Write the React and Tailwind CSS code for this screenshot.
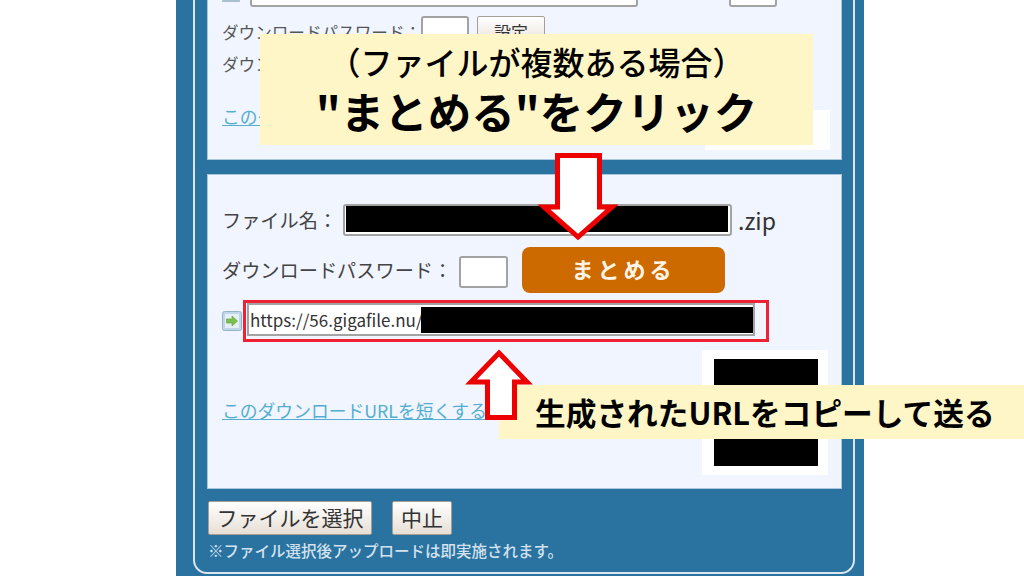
const jp = { fontFamily: '"Noto Sans CJK JP", sans-serif' };

const DownArrow = () => (
  <svg width="84" height="90" viewBox="0 0 84 90" className="absolute left-[536px] top-[152px]">
    <path d="M21.5 3.5H63.5V55H76L42 85L8 55H21.5Z" fill="#fff" stroke="#ee0000" strokeWidth="5" strokeMiterlimit="10" />
  </svg>
);

const UpArrow = () => (
  <svg width="74" height="76" viewBox="0 0 74 76" className="absolute left-[463px] top-[347px]">
    <path d="M36 6L64 35H51.5V70.5H24.5V35H8Z" fill="#fff" stroke="#ee0000" strokeWidth="5" strokeMiterlimit="10" />
  </svg>
);

const GoIcon = () => (
  <svg width="20" height="20" viewBox="0 0 20 20" className="shrink-0">
    <rect x="0.5" y="0.5" width="19" height="19" rx="2" fill="#c0d7ea" stroke="#93b4cd" />
    <rect x="3" y="3" width="14" height="14" fill="#e6eff5" />
    <path d="M4.5 8H10V5L15.5 10L10 15V12H4.5Z" fill="#7cc04f" stroke="#5a9e38" strokeWidth="0.6" />
  </svg>
);

const Field = ({ w, children, className = '' }) => (
  <div className={`relative bg-white border-2 border-[#a3a3a3] rounded-[3px] overflow-hidden shrink-0 ${w} ${className}`}>{children}</div>
);

const GreyButton = ({ children, className = '' }) => (
  <div className={`flex items-center justify-center bg-gradient-to-b from-white to-[#e6dfd6] border border-[#a89f94] text-[#333] rounded-[2px] ${className}`}>{children}</div>
);

export default function App() {
  return (
    <div className="relative w-[1024px] h-[576px] overflow-hidden bg-white" style={jp}>
      <div className="ml-[176px] w-[688px] h-[576px] bg-[#2a72a0] pl-[17px] pr-[9px]">
        <div className="h-[574px] border-l-2 border-r-2 border-b-2 border-[#dbe6ee] rounded-bl-[14px] rounded-br-[14px] pl-[12px] pr-[11px]">
          <section className="h-[160px] bg-[#f0f5ff] border-x border-b border-[#a9c7dc] pl-[14px] text-[16.6px] text-[#555] overflow-hidden">
            <div className="flex h-[8px] -mt-[1px]">
              <div className="w-[18px] h-[3px] bg-[#a9bfd2] rounded-b-[1px]" />
              <Field w="w-[388px]" className="h-[30px] -mt-[22px] ml-[10px]" />
              <Field w="w-[48px]" className="h-[30px] -mt-[22px] ml-[91px]" />
            </div>
            <div className="flex items-center mt-[9px] h-[32px]">
              <span className="w-[199px] whitespace-nowrap">ダウンロードパスワード：</span>
              <Field w="w-[48px]" className="h-[32px]" />
              <GreyButton className="w-[68px] h-[32px] ml-[8px] text-[17px]">設定</GreyButton>
            </div>
            <div className="mt-[1px] leading-[30px]">ダウンロードURL</div>
            <div className="mt-[24px] w-fit text-[17.8px] text-[#55aecf] underline">このダウンロードURLを短くする</div>
          </section>

          <section className="relative mt-[14px] h-[315px] bg-[#f0f5ff] border border-[#a9c7dc] pl-[14px] text-[19.2px] text-[#444]">
            <div className="flex items-center h-[32px] mt-[29px]">
              <span className="w-[121px]">ファイル名：</span>
              <Field w="w-[389px]" className="h-[32px]">
                <div className="h-[26px] w-[382px] ml-[1px] bg-black" />
              </Field>
              <span className="ml-[6px] text-[23px] text-[#333]">.zip</span>
            </div>
            <div className="flex items-center h-[46px] mt-[11px]">
              <span className="w-[237px] whitespace-nowrap">ダウンロードパスワード：</span>
              <Field w="w-[49px]" className="h-[32px] mt-[3px]" />
              <div className="ml-[14px] w-[203px] h-[46px] pb-[3px] flex items-center justify-center rounded-[8px] bg-[#cc6a00] text-[#fff4e6] text-[22px] font-bold tracking-[4px]">まとめる</div>
            </div>
            <div className="flex items-center mt-[7px] h-[42px]">
              <GoIcon />
              <div className="ml-[1px] w-[526px] h-[42px] border-[3px] border-[#ee2233] pl-[1px]">
                <div className="flex items-center w-[508px] h-[33px] bg-white border-2 border-[#a3a3a3] overflow-hidden">
                  <span className="pl-[1px] w-[172px] shrink-0 text-[17px] text-[#333] whitespace-nowrap">https://56.gigafile.nu/</span>
                  <div className="h-[26px] w-[332px] bg-black" />
                </div>
              </div>
            </div>
            <div className="flex items-start justify-between pr-[13px] mt-[8px]">
              <div className="mt-[47px] text-[#55aecf] underline text-[17.8px]">このダウンロードURLを短くする</div>
              <div className="w-[126px] h-[125px] bg-white pt-[9px] pl-[12px]">
                <div className="w-[104px] h-[107px] bg-black" />
              </div>
            </div>
          </section>

          <div className="flex gap-[20px] mt-[12px] ml-[1px]">
            <GreyButton className="w-[164px] h-[34px] text-[21px]">ファイルを選択</GreyButton>
            <GreyButton className="w-[60px] h-[34px] text-[21px]">中止</GreyButton>
          </div>
          <p className="mt-[5px] ml-[1px] text-[15.5px] leading-[20px] font-medium text-[#d3e2ee] whitespace-nowrap">※ファイル選択後アップロードは即実施されます。</p>
        </div>
      </div>

      {/* white patch left under the first caption */}
      <div className="absolute left-[705px] top-[110px] w-[125px] h-[40px] bg-white" />

      <div className="absolute left-[260px] top-[34px] w-[553px] h-[111px] bg-[#fff6c8] flex flex-col items-center text-black">
        <div className="text-[32px] leading-[40px] mt-[7px] font-medium whitespace-nowrap">（ファイルが複数ある場合）</div>
        <div className="text-[43.5px] leading-[56px] mt-[2px] font-bold whitespace-nowrap">"まとめる"をクリック</div>
      </div>
      <DownArrow />
      <div className="absolute left-[499px] top-[385px] w-[525px] h-[54px] bg-[#fff6c8] pl-[36px] flex items-center text-black text-[30.7px] font-bold whitespace-nowrap">生成されたURLをコピーして送る</div>
      <UpArrow />
    </div>
  );
}
